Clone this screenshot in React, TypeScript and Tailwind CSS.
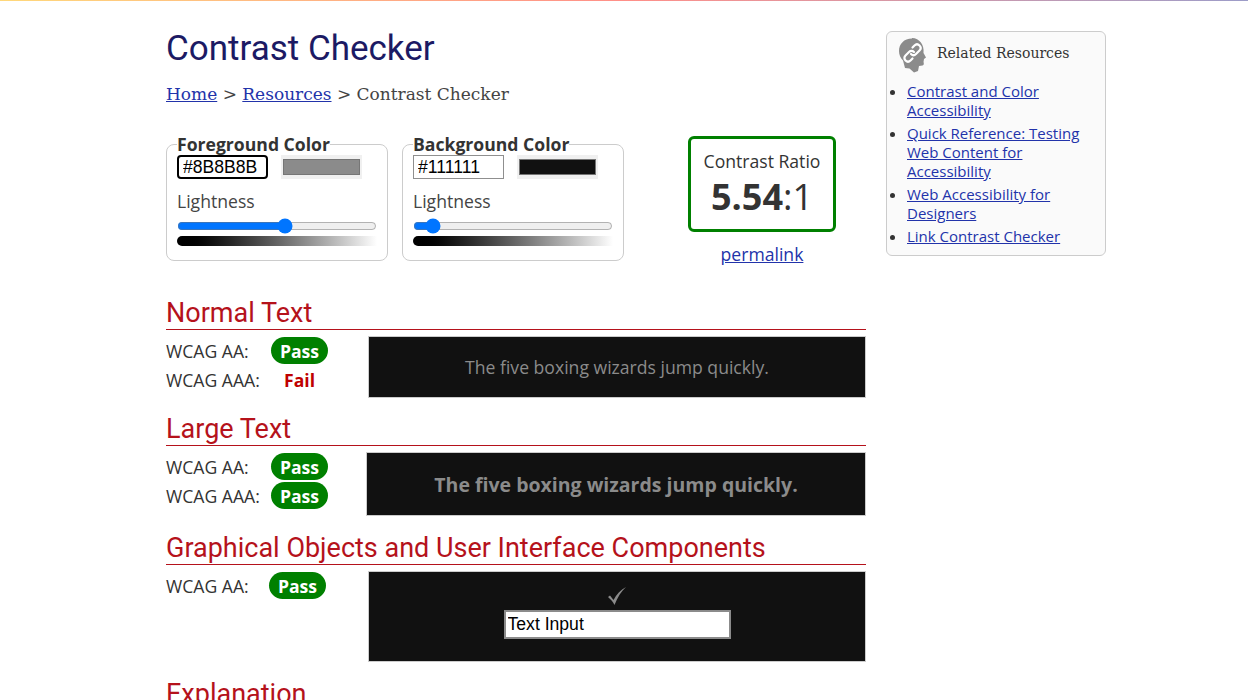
function Pass({ className = "" }: { className?: string }) {
  return (
    <span className={"inline-flex items-center justify-center w-[57px] h-[27px] rounded-[14px] bg-[#008000] text-white font-bold text-[17.6px] " + className}>
      Pass
    </span>
  );
}

function Fail() {
  return <span className="inline-flex items-center justify-center w-[57px] h-[27px] text-[#bf0000] font-bold text-[17.6px]">Fail</span>;
}

function Heading({ children }: { children: React.ReactNode }) {
  return (
    <h2 className="font-['Roboto',sans-serif] text-[27px] leading-[32px] text-[#b5121b] border-b border-[#b5121b]">
      {children}
    </h2>
  );
}

function Row({ label, children }: { label: string; children: React.ReactNode }) {
  return (
    <div className="flex items-center h-[29px]">
      <span className="w-[105px]">{label}</span>
      {children}
    </div>
  );
}

function ColorField({
  legend,
  value,
  color,
  lightness,
  focused,
}: {
  legend: string;
  value: string;
  color: string;
  lightness: number;
  focused?: boolean;
}) {
  return (
    <fieldset className="w-[222px] h-[129px] border border-[#cccccc] rounded-[8px] px-[10px] pb-0 -mt-[4px]">
      <legend className="font-bold text-[#333333] leading-[24px]">{legend}</legend>
      <div className="flex items-center gap-[13px] mt-[-1px]">
        <input
          readOnly
          value={value}
          className={
            "w-[91px] h-[24px] px-[4px] font-['Liberation_Sans',sans-serif] text-[17.6px] text-black bg-white border outline-none " +
            (focused ? "border-black border-2 rounded-[4px] px-[3px]" : "border-[#8f8f8f]")
          }
        />
        <div className="w-[81px] h-[24px] bg-[#f0f0f0] flex items-center justify-center">
          <div className="w-[77px] h-[16px] border border-[#767676]" style={{ backgroundColor: color }} />
        </div>
      </div>
      <div className="mt-[8px] leading-[28px] text-[#444444]">Lightness</div>
      <input type="range" readOnly min={0} max={100} step={0.1} value={lightness} className="block w-[200px] h-[16px] m-0 mt-[3px] accent-[#0075ff]" />
      <div className="w-[200px] h-[10px] mt-[2px] rounded-l-[5px] bg-gradient-to-r from-black to-white" />
    </fieldset>
  );
}

const links = [
  "Contrast and Color Accessibility",
  "Quick Reference: Testing Web Content for Accessibility",
  "Web Accessibility for Designers",
  "Link Contrast Checker",
];

function HeadIcon() {
  return (
    <svg width="30" height="36" viewBox="0 0 30 36" className="shrink-0">
      <path
        d="M14 0.5C6 0.5 1 6 1 13c0 4 1.500 7 4 9.500L7 30l4.500 0.500L16 34.500l4-1.500 1-5 3.500-0.500c1.500-0.500 1.500-2 1-3.500l0.500-3 2-1.500-2.500-4.500c1-8-4-15-11.500-15z"
        fill="#8b8b8b"
      />
      <g fill="none" stroke="#ffffff" strokeWidth="2.200" strokeLinecap="round">
        <path d="M14.500 9.500l2-2c1.500-1.500 3.500-1.500 5 0s1.500 3.500 0 5l-3.500 3.500c-1.500 1.500-3.500 1.500-5 0" />
        <path d="M14.500 20.500l-2 2c-1.500 1.500-3.500 1.500-5 0s-1.500-3.500 0-5l3.500-3.500c1.500-1.500 3.500-1.500 5 0" />
      </g>
    </svg>
  );
}

export default function App() {
  return (
    <div className="min-h-[700px] h-[700px] overflow-hidden bg-white font-['Open_Sans',sans-serif] text-[17.6px] text-[#333333]">
      <div className="h-px bg-gradient-to-r from-[#ffd87a] via-[#ff8f88] to-[#9c9cc8]" />
      <div className="flex ml-[166px] gap-[20px]">
        <main className="w-[700px] shrink-0">
          <h1 className="mt-[28px] font-['Roboto',sans-serif] text-[35px] leading-[40px] text-[#1c1a64]">Contrast Checker</h1>
          <p className="mt-[13px] font-['DejaVu_Serif',serif] text-[17px] leading-[24px] text-[#444444]">
            <a href="#" className="underline text-[#2233aa]">Home</a> &gt;{" "}
            <a href="#" className="underline text-[#2233aa]">Resources</a> &gt; Contrast Checker
          </p>
          <div className="flex mt-[30px]">
            <div className="flex gap-[14px]">
              <ColorField legend="Foreground Color" value="#8B8B8B" color="#8b8b8b" lightness={54.5} focused />
              <ColorField legend="Background Color" value="#111111" color="#111111" lightness={6.7} />
            </div>
            <div className="ml-[64px] w-[148px] text-center">
              <div className="h-[96px] border-[3px] border-[#008000] rounded-[6px] pt-[9px]">
                <div className="leading-[26px]">Contrast Ratio</div>
                <div className="text-[36px] leading-[46px]">
                  <b>5.54</b>:1
                </div>
              </div>
              <a href="#" className="inline-block mt-[9px] leading-[26px] underline text-[#2233aa]">permalink</a>
            </div>
          </div>

          <section className="mt-[30px]">
            <Heading>Normal Text</Heading>
            <div className="flex mt-[6px]">
              <div className="w-[202px]">
                <Row label="WCAG AA:"><Pass /></Row>
                <Row label="WCAG AAA:"><Fail /></Row>
              </div>
              <div className="flex-1 h-[62px] bg-[#111111] border border-[#cccccc] flex items-center justify-center text-[#8b8b8b]">
                The five boxing wizards jump quickly.
              </div>
            </div>
          </section>

          <section className="mt-[15px]">
            <Heading>Large Text</Heading>
            <div className="flex mt-[6px]">
              <div className="w-[200px]">
                <Row label="WCAG AA:"><Pass /></Row>
                <Row label="WCAG AAA:"><Pass /></Row>
              </div>
              <div className="flex-1 h-[64px] bg-[#111111] border border-[#cccccc] flex items-center justify-center text-[#8b8b8b] font-bold text-[19.5px]">
                The five boxing wizards jump quickly.
              </div>
            </div>
          </section>

          <section className="mt-[16px]">
            <Heading>Graphical Objects and User Interface Components</Heading>
            <div className="flex mt-[6px]">
              <div className="w-[202px]">
                <div className="flex items-center h-[29px]">
                  <span className="w-[103px]">WCAG AA:</span>
                  <Pass />
                </div>
              </div>
              <div className="flex-1 h-[91px] bg-[#111111] border border-[#cccccc] flex flex-col items-center pt-[14px]">
                <svg width="20" height="20" viewBox="0 0 20 20" fill="#8b8b8b">
                  <path d="M1 11l2-1.500 3.500 4.500C9.500 8.500 13.500 4 19 1c-4.500 4-8.500 10-11.500 18-1.500-3-3.500-5.500-6.500-8z" />
                </svg>
                <input
                  readOnly
                  value="Text Input"
                  className="mt-[4px] w-[227px] h-[29px] px-[2px] bg-white border-2 border-[#8b8b8b] font-['Liberation_Sans',sans-serif] text-[17.6px] text-black outline-none"
                />
              </div>
            </div>
          </section>

          <section className="mt-[16px]">
            <Heading>Explanation</Heading>
          </section>
        </main>

        <aside className="w-[220px] h-[225px] mt-[30px] border border-[#cccccc] rounded-[6px] bg-[#fafafa] text-[15px] leading-[19px]">
          <div className="flex items-center gap-[9px] pl-[11px] pt-[6px]">
            <HeadIcon />
            <span className="font-['DejaVu_Serif',serif] text-[14px] text-[#333333] -mt-[6px]">Related Resources</span>
          </div>
          <ul className="list-disc pl-[20px] mt-[8px] flex flex-col gap-[4px]">
            {links.map((l) => (
              <li key={l}>
                <a href="#" className="underline text-[#2233aa]">{l}</a>
              </li>
            ))}
          </ul>
        </aside>
      </div>
    </div>
  );
}
